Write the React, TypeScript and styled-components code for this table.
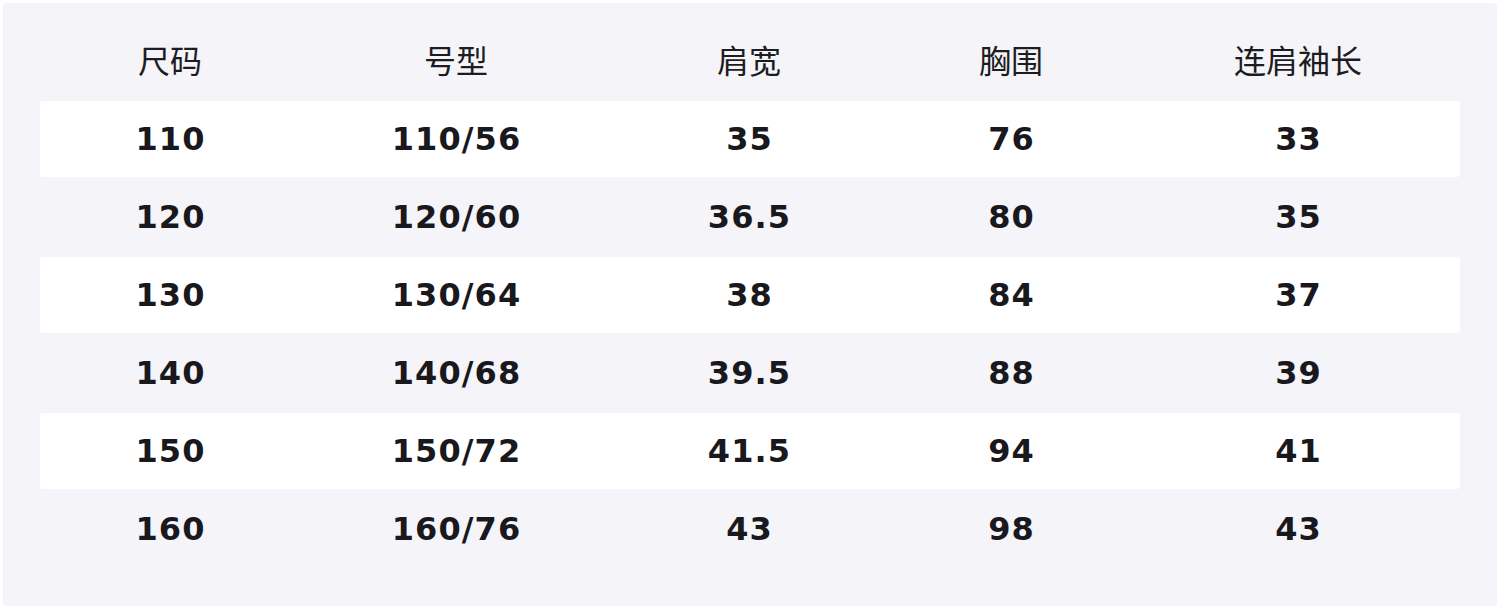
import React from "react";
import styled, { createGlobalStyle } from "styled-components";

const Global = createGlobalStyle`
  html, body { margin: 0; padding: 0; background: #ffffff; }
  body { font-family: "DejaVu Sans", "Noto Sans CJK SC", sans-serif; }
`;

const Page = styled.div`
  width: 1500px;
  height: 609px;
  box-sizing: border-box;
  padding: 3px;
  background: #ffffff;
`;

const Panel = styled.div`
  height: 100%;
  box-sizing: border-box;
  background: #f4f4f9;
  border-radius: 4px;
  padding: 20px 37px 0 37px;
`;

const cols = "260px 312px 274px 250px 324px";

const HeaderRow = styled.div`
  display: grid;
  grid-template-columns: ${cols};
  height: 78px;
  box-sizing: border-box;
  padding-bottom: 6px;
  align-items: center;
`;

const HeadCell = styled.div`
  text-align: center;
  font-family: "Noto Sans CJK SC", "DejaVu Sans", sans-serif;
  font-size: 32px;
  font-weight: 400;
  color: #1c1c22;
`;

const Body = styled.div`
  display: flex;
  flex-direction: column;
  gap: 2px;
`;

const Row = styled.div<{ $alt: boolean }>`
  display: grid;
  grid-template-columns: ${cols};
  height: 76px;
  align-items: center;
  background: ${(p) => (p.$alt ? "#ffffff" : "transparent")};
  border-radius: 3px;
`;

const Cell = styled.div`
  text-align: center;
  font-family: "DejaVu Sans", sans-serif;
  font-size: 32px;
  font-weight: 700;
  color: #18181d;
  letter-spacing: 1.1px;
  padding-left: 1.1px;
`;

const headers = ["尺码", "号型", "肩宽", "胸围", "连肩袖长"];
const rows = [
  ["110", "110/56", "35", "76", "33"],
  ["120", "120/60", "36.5", "80", "35"],
  ["130", "130/64", "38", "84", "37"],
  ["140", "140/68", "39.5", "88", "39"],
  ["150", "150/72", "41.5", "94", "41"],
  ["160", "160/76", "43", "98", "43"],
];

export default function App() {
  return (
    <Page>
      <Global />
      <Panel>
        <HeaderRow>
          {headers.map((h) => (
            <HeadCell key={h}>{h}</HeadCell>
          ))}
        </HeaderRow>
        <Body>
          {rows.map((r, i) => (
            <Row key={i} $alt={i % 2 === 0}>
              {r.map((c, j) => (
                <Cell key={j}>{c}</Cell>
              ))}
            </Row>
          ))}
        </Body>
      </Panel>
    </Page>
  );
}
